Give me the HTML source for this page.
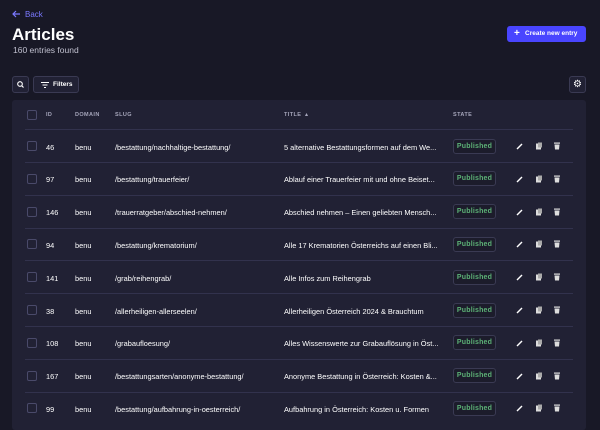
<!DOCTYPE html>
<html><head><style>
*{margin:0;padding:0;box-sizing:border-box}
body{width:600px;height:422px;background:#181826;font-family:"Liberation Sans",sans-serif;color:#fff;position:relative;overflow:hidden}
.a{position:absolute}
.back{left:12px;top:10px;font-size:8px;color:#7b79ff}
h1{position:absolute;left:12px;top:25px;font-size:17px;font-weight:bold}
.sub{left:13px;top:45px;font-size:8.5px;color:#c0c0cf}
.btn{left:507px;top:26px;width:79px;height:16px;background:#4945ff;border-radius:3px;font-size:6.5px;font-weight:bold;line-height:16px;padding-left:18px}
.ib{border:1px solid #3a3a53;border-radius:3px;background:#212134}
.table{left:12px;top:100px;width:574px;height:330px;background:#212134;border-radius:3px}
.hd{position:absolute;top:112px;font-size:5.5px;font-weight:bold;color:#a5a5ba;letter-spacing:.4px}
.line{position:absolute;left:25px;width:548px;height:1px;background:#32324d}
.cb{position:absolute;left:27px;width:10px;height:10px;border:1px solid #4a4a6a;border-radius:2px;background:#212134}
.c{position:absolute;font-size:7.4px;color:#fff;white-space:nowrap}
.badge{position:absolute;left:453px;width:43px;height:15px;border:1px solid #3a3a53;border-radius:3px;background:#1c1c2b;color:#5cb176;font-size:7px;font-weight:bold;text-align:center;line-height:13px;letter-spacing:.2px}
</style></head><body>
<div class="a back"><svg width="9" height="8" viewBox="0 0 9 8" style="vertical-align:-1px;margin-right:4px"><path d="M8 4H1M4 1L1 4L4 7" stroke="#7b79ff" stroke-width="1.2" fill="none"/></svg>Back</div>
<h1>Articles</h1>
<div class="a sub">160 entries found</div>
<div class="a btn" style="color:#fff"><span style="position:absolute;left:7px;top:0;font-size:10px">+</span>Create new entry</div>
<div class="a ib" style="left:12px;top:76px;width:17px;height:17px"><svg width="15" height="15" viewBox="0 0 15 15"><circle cx="7" cy="7" r="2.3" stroke="#fff" stroke-width="1.1" fill="none"/><path d="M8.7 8.7L10.5 10.5" stroke="#fff" stroke-width="1.2"/></svg></div>
<div class="a ib" style="left:33px;top:76px;width:46px;height:17px;font-size:6.5px;font-weight:bold;line-height:15px;padding-left:19px">Filters<svg class="a" style="left:7px;top:5px" width="8" height="6" viewBox="0 0 8 6"><path d="M0 .5H8M1.5 3H6.5M3 5.5H5" stroke="#fff" stroke-width="1"/></svg></div>
<div class="a ib" style="left:569px;top:76px;width:17px;height:17px;color:#fff;font-size:10px;text-align:center;line-height:15px">⚙</div>
<div class="a table"></div>
<div class="cb" style="top:110px"></div>
<div class="hd" style="left:46px">ID</div>
<div class="hd" style="left:75px">DOMAIN</div>
<div class="hd" style="left:115px">SLUG</div>
<div class="hd" style="left:284px">TITLE &nbsp;▴</div>
<div class="hd" style="left:453px">STATE</div>
<div class="line" style="top:129px"></div>
<div id="rows"></div>
<script>
var d=[["46","/bestattung/nachhaltige-bestattung/","5 alternative Bestattungsformen auf dem We..."],["97","/bestattung/trauerfeier/","Ablauf einer Trauerfeier mit und ohne Beiset..."],["146","/trauerratgeber/abschied-nehmen/","Abschied nehmen – Einen geliebten Mensch..."],["94","/bestattung/krematorium/","Alle 17 Krematorien Österreichs auf einen Bli..."],["141","/grab/reihengrab/","Alle Infos zum Reihengrab"],["38","/allerheiligen-allerseelen/","Allerheiligen Österreich 2024 & Brauchtum"],["108","/grabaufloesung/","Alles Wissenswerte zur Grabauflösung in Öst..."],["167","/bestattungsarten/anonyme-bestattung/","Anonyme Bestattung in Österreich: Kosten &..."],["99","/bestattung/aufbahrung-in-oesterreich/","Aufbahrung in Österreich: Kosten u. Formen"]];
var h="";
d.forEach(function(r,i){var y=146+i*32.8;
h+='<div class="cb" style="top:'+(y-5)+'px"></div>';
h+='<div class="c" style="left:46px;top:'+(y-3.5)+'px">'+r[0]+'</div>';
h+='<div class="c" style="left:75px;top:'+(y-3.5)+'px">benu</div>';
h+='<div class="c" style="left:115px;top:'+(y-3.5)+'px">'+r[1]+'</div>';
h+='<div class="c" style="left:284px;top:'+(y-3.5)+'px">'+r[2]+'</div>';
h+='<div class="badge" style="top:'+(y-7.5)+'px">Published</div>';
h+='<svg class="a" style="left:516px;top:'+(y-4)+'px" width="50" height="8" viewBox="0 0 50 8"><path d="M1 7L6 2" stroke="#fff" stroke-width="1.4"/><rect x="20" y="1.5" width="5" height="6" fill="#ddd"/><rect x="22" y="0.5" width="4" height="5" fill="#aaa"/><rect x="38" y="0.5" width="6" height="1.2" fill="#ddd"/><path d="M38.5 2.5H43.5L43 7.5H39Z" fill="#ddd"/></svg>';
if(i<8)h+='<div class="line" style="top:'+(y+16)+'px"></div>';});
document.getElementById("rows").innerHTML=h;
</script>
</body></html>
